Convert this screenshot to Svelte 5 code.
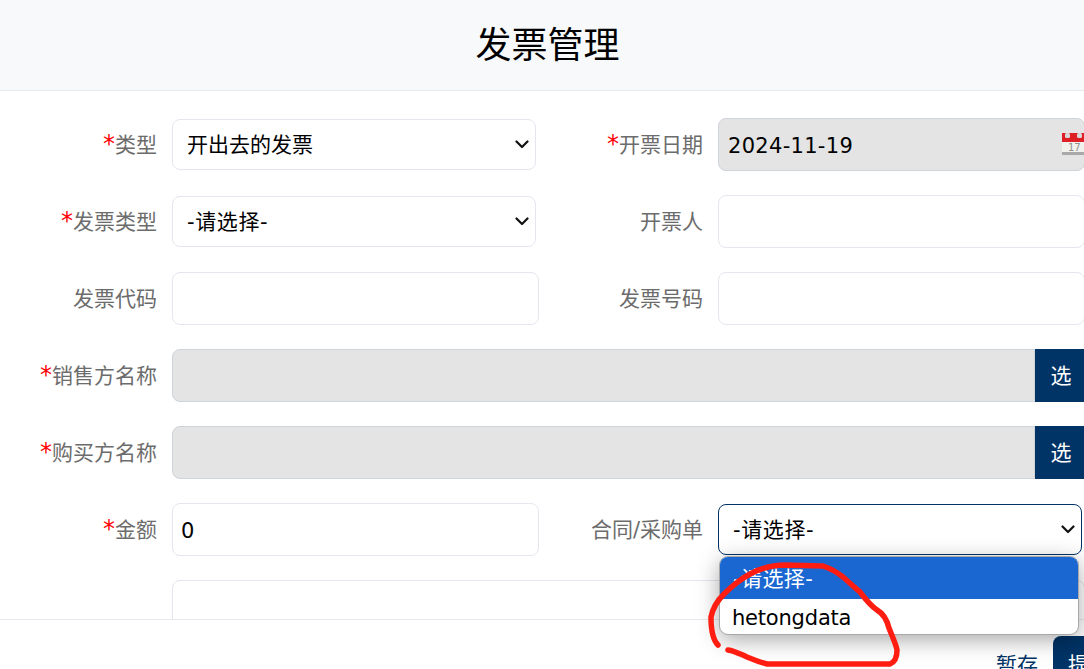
<script lang="ts">
  const inkPath =
    "M718 645 C713 640 711 632 711 617 C713 607 717 601 724 594 C733 585 742 578 752 573 C762 568 772 565 785 565 L823 566 C832 569 838 573 843 577 C850 583 855 588 860 592 C866 600 871 606 877 610 C884 614 887 620 889 628 C892 636 896 644 897 650 C897 657 895 662 890 664 L867 664 L813 664 L767 664 C758 662 752 659 747 657 C740 654 735 651 728 650";
</script>

<div class="page">
  <header class="title-bar">
    <h1>发票管理</h1>
  </header>

  <main class="form-area">
    <form class="form-grid">
      <label class="field-label" for="kind"><i>*</i>类型</label>
      <select id="kind" class="select">
        <option>开出去的发票</option>
      </select>
      <label class="field-label" for="date"><i>*</i>开票日期</label>
      <div class="date-field">
        <input id="date" class="input disabled date" value="2024-11-19" readonly />
        <svg class="cal" width="24" height="24" viewBox="0 0 24 24" aria-hidden="true">
          <rect x="0" y="3" width="24" height="20" fill="#f1f1ee" />
          <rect x="0" y="21" width="24" height="3" fill="#a9a9a9" />
          <rect x="0" y="2" width="24" height="9" fill="#de1f26" />
          <rect x="3" y="2" width="5" height="5" rx="1.5" fill="#d8d8d8" />
          <rect x="15" y="2" width="5" height="5" rx="1.5" fill="#d8d8d8" />
          <text x="6" y="20" font-size="10" fill="#8f8f8f">17</text>
        </svg>
      </div>

      <label class="field-label" for="invoice-type"><i>*</i>发票类型</label>
      <select id="invoice-type" class="select placeholder">
        <option>-请选择-</option>
      </select>
      <label class="field-label" for="drawer">开票人</label>
      <input id="drawer" class="input" />

      <label class="field-label" for="code">发票代码</label>
      <input id="code" class="input" />
      <label class="field-label" for="number">发票号码</label>
      <input id="number" class="input" />

      <label class="field-label" for="seller"><i>*</i>销售方名称</label>
      <div class="picker">
        <input id="seller" class="input disabled" readonly />
        <button type="button" class="pick-btn">选</button>
      </div>

      <label class="field-label" for="buyer"><i>*</i>购买方名称</label>
      <div class="picker">
        <input id="buyer" class="input disabled" readonly />
        <button type="button" class="pick-btn">选</button>
      </div>

      <label class="field-label" for="amount"><i>*</i>金额</label>
      <input id="amount" class="input amount" value="0" />
      <label class="field-label" for="contract">合同/采购单</label>
      <select id="contract" class="select placeholder focused">
        <option>-请选择-</option>
        <option>hetongdata</option>
      </select>

      <span></span>
      <textarea class="input notes" aria-label="备注"></textarea>
    </form>
  </main>

  <footer class="actions">
    <button type="button" class="btn-link">暂存</button>
    <button type="button" class="btn-primary">提交</button>
  </footer>

  <!-- open dropdown of the contract select -->
  <ul class="dropdown">
    <li class="active">-请选择-</li>
    <li class="plain">hetongdata</li>
  </ul>

  <svg class="ink" width="1084" height="669" viewBox="0 0 1084 669" aria-hidden="true">
    <path d={inkPath} />
  </svg>
</div>

<style>
  :global(body) {
    margin: 0;
    overflow: hidden;
  }

  .page {
    position: relative;
    display: flex;
    flex-direction: column;
    width: 1095px;
    height: 669px;
    overflow: hidden;
    background: #fff;
    font-family: "DejaVu Sans", "Noto Sans CJK SC", sans-serif;
    font-size: 21px;
    color: #000;
  }

  .title-bar {
    flex: none;
    box-sizing: border-box;
    height: 91px;
    padding-bottom: 6px;
    display: flex;
    align-items: center;
    justify-content: center;
    background: #f8f9fa;
    border-bottom: 1px solid #e6e9ee;
  }

  h1 {
    margin: 0;
    font-size: 36px;
    font-weight: 400;
  }

  .form-area {
    flex: 1;
    min-height: 0;
    overflow: hidden;
    padding-top: 27px;
  }

  .form-grid {
    display: grid;
    grid-template-columns: 157px 367px 149px 367px;
    grid-auto-rows: 53px;
    column-gap: 15px;
    row-gap: 24px;
    align-items: center;
  }

  .field-label {
    padding-bottom: 3px;
    text-align: right;
    color: #6c6c6c;
    white-space: nowrap;
  }

  .field-label i {
    font-style: normal;
    font-size: 24px;
    line-height: 0;
    color: #f00;
  }

  .input,
  .select {
    box-sizing: border-box;
    font: inherit;
    color: #000;
    background-color: #fff;
    border: 1px solid #e4e7ee;
    border-radius: 8px;
    outline: none;
  }

  .input {
    display: block;
    width: 100%;
    height: 53px;
    padding: 0 9px;
  }

  .amount {
    padding-left: 8px;
    padding-top: 2px;
  }

  .date {
    padding-top: 2px;
    letter-spacing: 0.3px;
  }

  .input.disabled {
    background: #e4e4e4;
    border-color: #ced4da;
  }

  .select {
    width: 364px;
    height: 51px;
    padding: 0 14px;
    appearance: none;
    background-image: url("data:image/svg+xml,%3csvg xmlns='http://www.w3.org/2000/svg' viewBox='0 0 14 9'%3e%3cpath fill='none' stroke='%23111' stroke-width='2.2' stroke-linecap='round' stroke-linejoin='round' d='M1.5 1.5 7 7l5.5-5.5'/%3e%3c/svg%3e");
    background-repeat: no-repeat;
    background-position: right 6px center;
    background-size: 14px 9px;
  }

  .select.placeholder {
    letter-spacing: 0.6px;
  }

  .select.focused {
    border-color: #003366;
  }

  .date-field {
    position: relative;
  }

  .cal {
    position: absolute;
    top: 13px;
    right: -1px;
  }

  .picker {
    grid-column: 2 / -1;
    display: flex;
    height: 53px;
  }

  .picker .input {
    flex: 1;
    border-radius: 8px 0 0 8px;
  }

  .pick-btn {
    flex: none;
    width: 50px;
    padding: 0 0 3px 2px;
    border: none;
    background: #003366;
    color: #fff;
    font: inherit;
  }

  .notes {
    grid-column: 2 / -1;
    height: 110px;
    align-self: start;
    resize: none;
  }

  .actions {
    flex: none;
    box-sizing: border-box;
    width: 1125px;
    height: 50px;
    display: flex;
    justify-content: flex-end;
    align-items: flex-start;
    padding-top: 16px;
    background: #fff;
    border-top: 1px solid #e6e9ee;
  }

  .btn-link,
  .btn-primary {
    flex: none;
    height: 53px;
    padding: 0 15px;
    border: none;
    border-radius: 8px;
    font: inherit;
  }

  .btn-link {
    background: none;
    color: #003366;
  }

  .btn-primary {
    background: #003366;
    color: #fff;
  }

  .dropdown {
    position: absolute;
    left: 719px;
    top: 556px;
    box-sizing: border-box;
    width: 360px;
    margin: 0;
    padding: 0;
    list-style: none;
    overflow: hidden;
    background: #fff;
    border: 1px solid #a8a8a8;
    border-radius: 9px;
    box-shadow: 0 5px 22px rgba(0, 0, 0, 0.34);
  }

  .dropdown li {
    box-sizing: border-box;
    line-height: 30px;
  }

  .dropdown li.active {
    height: 42px;
    padding: 7px 0 0 13px;
    background: #1a67d2;
    color: #fff;
    letter-spacing: 0.4px;
  }

  .dropdown li.plain {
    height: 35px;
    padding: 4px 0 0 12px;
    letter-spacing: -0.2px;
  }

  .ink {
    position: absolute;
    left: 0;
    top: 0;
    pointer-events: none;
  }

  .ink path {
    fill: none;
    stroke: #ff1d12;
    stroke-width: 5.5;
    stroke-linecap: round;
    stroke-linejoin: round;
  }
</style>
